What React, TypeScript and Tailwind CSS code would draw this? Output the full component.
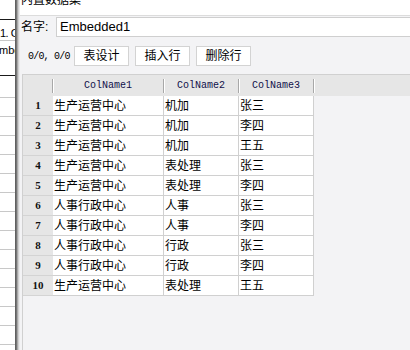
import React from "react";

const rows: [string, string, string][] = [
  ["生产运营中心", "机加", "张三"],
  ["生产运营中心", "机加", "李四"],
  ["生产运营中心", "机加", "王五"],
  ["生产运营中心", "表处理", "张三"],
  ["生产运营中心", "表处理", "李四"],
  ["人事行政中心", "人事", "张三"],
  ["人事行政中心", "人事", "李四"],
  ["人事行政中心", "行政", "张三"],
  ["人事行政中心", "行政", "李四"],
  ["生产运营中心", "表处理", "王五"],
];

const cjk = "font-['Liberation_Sans','Noto_Sans_CJK_SC',sans-serif]";

function Sep() {
  return <span className="w-px h-[14px] bg-[#a8a8a8] shadow-[1px_0_0_#ffffff] shrink-0" />;
}

export default function App() {
  return (
    <div className={`w-[410px] h-[350px] overflow-hidden flex bg-white ${cjk} text-black`}>
      {/* background window strip */}
      <div className="w-[15px] shrink-0 flex flex-col bg-white overflow-hidden">
        <div className="h-[20px] border-b border-[#1a1a1a] shrink-0" />
        <div className="h-[21px] border-b border-[#c8c8c8] shrink-0 pt-[7px] text-[11px] leading-[12px] whitespace-nowrap tracking-[-0.5px]">
          1.&nbsp;G
        </div>
        <div className="h-[35px] border-b border-[#1a1a1a] shrink-0 pt-[3px] text-[11px] leading-[12px] whitespace-nowrap ml-[-1px]">
          mbed
        </div>
        <div className="h-[22px] border-b border-[#c8c8c8] shrink-0" />
        {Array.from({ length: 13 }).map((_, i) => (
          <div key={i} className="h-[19px] border-b border-[#c8c8c8] shrink-0" />
        ))}
      </div>
      {/* shadow edge */}
      <div className="w-[5px] shrink-0 bg-[linear-gradient(to_right,#5a5a5a,#6a6a6a_25%,#a8a8a8_50%,#dadada_75%,#f3f3f5)]" />
      {/* dialog */}
      <div className="flex-1 flex flex-col bg-[#f3f3f5] min-w-0">
        <div className="h-[16px] bg-white border-b border-[#dcdcdc] overflow-hidden shrink-0 pl-[1px]">
          <div className="mt-[-8px] text-[12px] leading-[16px] whitespace-nowrap">内置数据集</div>
        </div>
        <div className="h-[21px] flex items-start pt-px shrink-0">
          <span className="text-[12px] leading-[20px] pl-[1px] w-[36px] shrink-0 whitespace-nowrap">名字:</span>
          <div className="flex-1 h-[20px] bg-white border border-[#cfcfcf] border-r-0 flex items-center pl-[3px] text-[13px] whitespace-nowrap">
            Embedded1
          </div>
        </div>
        <div className="flex items-center pt-[9px] shrink-0">
          <span className="ml-[8px] w-[46px] font-['Liberation_Mono',monospace] text-[10px] tracking-[-0.8px] text-black whitespace-nowrap">0/0, 0/0</span>
          <div className="flex gap-[6px]">
            {["表设计", "插入行", "删除行"].map((t) => (
              <button
                key={t}
                className="w-[55px] h-[20px] bg-white border border-[#d3d3d3] text-[12px] leading-[18px] flex items-center justify-center"
              >
                {t}
              </button>
            ))}
          </div>
        </div>
        <div className="mt-[8px] ml-[2px] flex-1 border-l border-t border-[#d0d0d0] flex flex-col">
          <div className="h-[21px] bg-[#e6e6e6] flex shrink-0 font-['Liberation_Mono',monospace] text-[10px] text-[#10104a]">
            <div className="w-[30px] flex items-center justify-end">
              <Sep />
            </div>
            {["ColName1", "ColName2", "ColName3"].map((c, i) => (
              <div key={c} className={`${i === 0 ? "w-[111px]" : "w-[75px]"} flex items-center`}>
                <span className="flex-1 text-center leading-[12px]">{c}</span>
                <Sep />
              </div>
            ))}
          </div>
          {rows.map((r, i) => (
            <div key={i} className="flex h-[20px] shrink-0">
              <div className="w-[30px] bg-[#e6e6e6] border-b border-[#d4d4d4] flex items-center justify-center font-['Liberation_Serif',serif] font-bold text-[11px] text-[#111]">
                {i + 1}
              </div>
              <div className="w-[111px] bg-white border-r border-b border-[#d0d0d0] flex items-center pl-px text-[12px] whitespace-nowrap overflow-hidden">
                {r[0]}
              </div>
              <div className="w-[75px] bg-white border-r border-b border-[#d0d0d0] flex items-center pl-px text-[12px] whitespace-nowrap overflow-hidden">
                {r[1]}
              </div>
              <div className="w-[75px] bg-white border-r border-b border-[#d0d0d0] flex items-center pl-px text-[12px] whitespace-nowrap overflow-hidden">
                {r[2]}
              </div>
            </div>
          ))}
        </div>
      </div>
    </div>
  );
}
